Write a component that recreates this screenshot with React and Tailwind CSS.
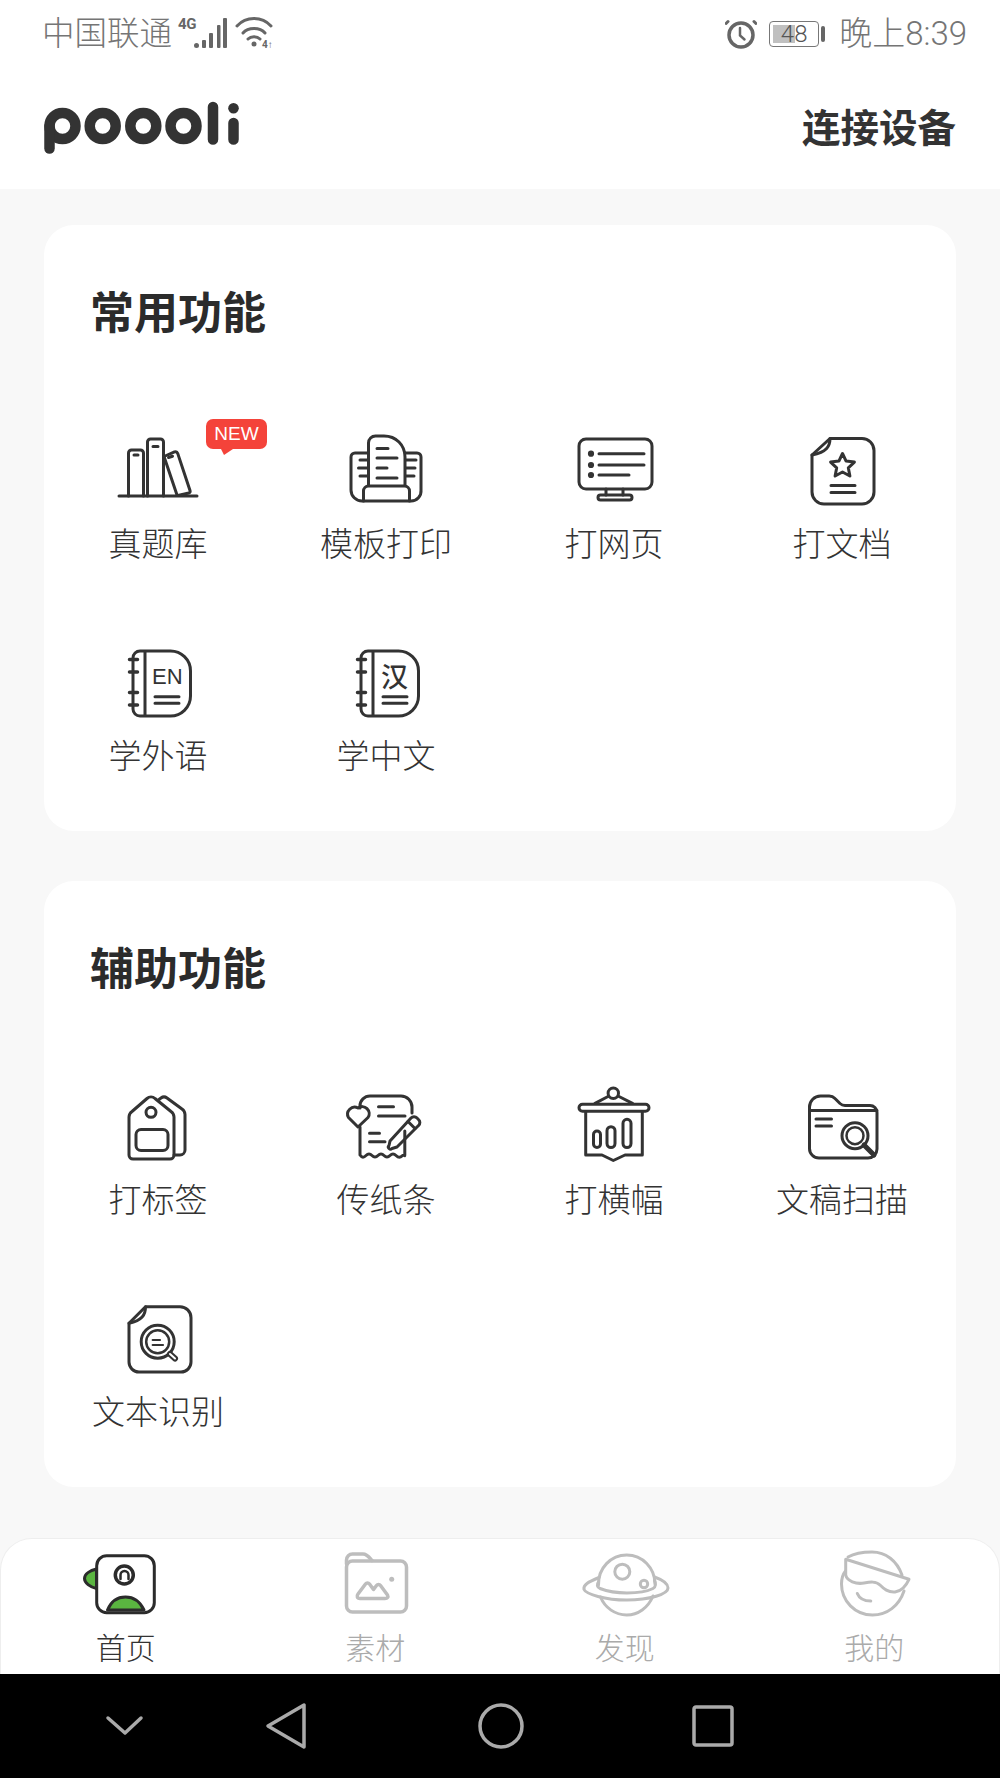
import React from 'react';

const CJK = "font-['Liberation_Sans','Noto_Sans_CJK_SC',sans-serif]";

// 80x80 box, all icons are drawn in this coordinate space
const Ic = ({ color = '#333', sw = 3, children }) => (
  <svg viewBox="0 0 80 80" fill="none" stroke={color} strokeWidth={sw} strokeLinecap="round" strokeLinejoin="round" className="w-[80px] h-[80px] overflow-visible">
    {children}
  </svg>
);

const Books = () => (
  <Ic>
    <path d="M1 68H79" />
    <path d="M10.500 68V25a3 3 0 0 1 3-3h9a3 3 0 0 1 3 3v43" />
    <path d="M29.500 68V14a3 3 0 0 1 3-3h10a3 3 0 0 1 3 3v54" />
    <path d="M16 27h4M35 18.500h5M50.500 29.500l4-1.300" />
    <path d="M46 28.500l10.500-4.600a2.500 2.500 0 0 1 3.200 1.500L72 62.500a2 2 0 0 1-1.300 2.500L60 67.500" />
    <path d="M46 28.500L59 67" />
  </Ic>
);

const Printer = () => (
  <Ic>
    <path d="M22 25H9a4 4 0 0 0-4 4v33a11 11 0 0 0 11 11h49a10 10 0 0 0 10-11V29a4 4 0 0 0-4-4H59" />
    <path d="M22.500 57V15a7 7 0 0 1 7-7H38c12 0 21 9 21 21v28" />
    <path d="M17.500 73V63a5 5 0 0 1 5-5h36a5 5 0 0 1 5 5v10" />
    <path d="M31 20.500h11M31 30h20M31 40h10M31 50h20" />
    <path d="M14 32h7M12.500 40h8.500M14 48h7M60 32h10M60 40h9M60 48h8" />
  </Ic>
);

const Monitor = () => (
  <Ic>
    <rect x="5" y="11" width="73" height="50" rx="7" />
    <path d="M25 25.700H70M25 37H70M25 47H55" />
    <path d="M32 61v6M49 61v6" />
    <rect x="24" y="67" width="34" height="5" rx="2.500" />
    <circle cx="17" cy="25.700" r="1.600" fill="#333" />
    <circle cx="17" cy="37" r="1.600" fill="#333" />
    <circle cx="17" cy="47" r="1.600" fill="#333" />
  </Ic>
);

const DocStar = () => (
  <Ic>
    <path d="M28 10.500H60a12 12 0 0 1 12 12V64a12 12 0 0 1-12 12H22a12 12 0 0 1-12-12V27Z" />
    <path d="M28 10.500C28 18 25 24 10 27" />
    <path d="M40.500 25.500l3.600 7.600 8.300 1-6.100 5.700 1.600 8.200-7.400-4-7.400 4 1.600-8.200-6.100-5.700 8.300-1Z" />
    <path d="M29 57.500H53M29 64.500H53" />
  </Ic>
);

const Notebook = ({ children }) => (
  <Ic>
    <path d="M27 11H52a20 20 0 0 1 20.500 20V56a20 20 0 0 1-20.500 20H27M27 11v65M27 11H22a7 7 0 0 0-7 7V69a7 7 0 0 0 7 7h5" />
    <path d="M11.500 19.500h8M11.500 32h8M11.500 52.500h8M11.500 65h8" strokeWidth="3.500" />
    <path d="M37 56.700H61M37 63.300H61" />
    {children}
  </Ic>
);

const Tag = () => (
  <Ic>
    <path d="M11 33a7 7 0 0 1 3-5.500L29 14.500a6 6 0 0 1 8 0L53 27.500a7 7 0 0 1 3 5.500V71a4 4 0 0 1-4 4H15a4 4 0 0 1-4-4Z" />
    <circle cx="33" cy="28.300" r="5" />
    <rect x="18" y="45.500" width="32" height="21" rx="5" />
    <path d="M41 15.500l2-1.500a5 5 0 0 1 6 0L64 25a7 7 0 0 1 3 5.500V66a5 5 0 0 1-5 5h-6" />
  </Ic>
);

const Receipt = () => (
  <Ic>
    <path d="M14 24v-2a10 10 0 0 1 10-10H55a11 11 0 0 1 11 11v6" />
    <path d="M14 43V71c2 3 4 2.500 6 .500s4-2 6 0 4 2 6 0 4-2 6 0 4 2 6 0 4-2 6 0 4 2.500 6 .500 2.800 1 2.800-1V47" />
    <path d="M12 43 2.500 33.500a7 7 0 0 1 9.500-9.500 7 7 0 0 1 10 9.500Z" />
    <path d="M32.500 22.700h15M32.500 32H59M23.500 49.300h10M23.500 57.700H39" />
    <path d="M44 57 65 34a4 4 0 0 1 6 0l1.500 1.500a4 4 0 0 1 0 6L51 63l-5 1.500a2 2 0 0 1-3-3Z" />
    <path d="M62 37.500l7 7" />
  </Ic>
);

const Banner = () => (
  <Ic>
    <circle cx="39.300" cy="9.300" r="5.200" />
    <path d="M21 19.300 34 12.500M45 12.500 58.500 19.300" />
    <rect x="5" y="20.300" width="70" height="7" rx="3.500" />
    <path d="M11.700 27.500V71H28l11.300 5.500L51 71H68.300V27.500" />
    <rect x="19.500" y="47" width="7" height="16.500" rx="3.500" />
    <rect x="33" y="42.700" width="8" height="20.800" rx="4" />
    <rect x="49" y="35.300" width="8" height="28.200" rx="4" />
  </Ic>
);

const FolderScan = () => (
  <Ic>
    <path d="M7.500 26V23A11 11 0 0 1 18.500 12H27a8 8 0 0 1 6 2.500L38 19.500a8 8 0 0 0 5 2H68a7 7 0 0 1 7 7V65a9 9 0 0 1-9 9H17a9.500 9.500 0 0 1-9.500-9.500Z" />
    <path d="M7.500 26.500H75M14 35H29.500M14 42H29.500" />
    <circle cx="53" cy="51.700" r="13" />
    <circle cx="53" cy="51.700" r="8.500" strokeWidth="2.500" />
    <path d="M62 61l10 10" strokeWidth="5" />
  </Ic>
);

const DocSearch = () => (
  <Ic>
    <path d="M27.500 10.700H62a11 11 0 0 1 11 11V66a10 10 0 0 1-10 10H21a10 10 0 0 1-10-10V27.300Z" />
    <path d="M27.500 10.700C27.500 19 24 24.500 11 27.300" />
    <circle cx="39.700" cy="45.700" r="16.500" />
    <circle cx="39.700" cy="45.700" r="11.500" strokeWidth="2.500" />
    <path d="M34.700 44H42M34.700 49H45" strokeWidth="2.200" />
    <path d="M52 58l5 4.500" strokeWidth="6" />
    <path d="M52 58l5 4.500" strokeWidth="2" stroke="#fff" />
  </Ic>
);

const HomeTab = () => (
  <Ic color="#2b2b2b" sw="3">
    <path d="M10.500 25C4 26.500 -1.500 30 -1.500 34.500S4 43 10.500 44.500Z" fill="#5ab540" />
    <rect x="10.700" y="11.700" width="57.600" height="57" rx="10" fill="#fff" />
    <path d="M21.500 66C25 57.500 31 53 39.500 53S54 57.500 58 66Z" fill="#5ab540" />
    <circle cx="38.300" cy="31" r="9" strokeWidth="3.500" />
    <path d="M34.500 35V31a4 4 0 0 1 8 0v4" strokeWidth="2.500" />
  </Ic>
);

const FolderTab = () => (
  <Ic color="#bdbdbd" sw="3.500">
    <rect x="11.500" y="17" width="60" height="51" rx="6" />
    <path d="M11.500 20V16a6 6 0 0 1 6-6H28c4 0 6 3 9 6.500" />
    <path d="M25 54.500c-3 0-3.500-2.500-2-4.500l7.500-10a2.500 2.500 0 0 1 4 0l4 5.500 3-4a2.500 2.500 0 0 1 4 0l7 9.500c1 2 0 3.500-2.500 3.500Z" />
    <circle cx="56.700" cy="35.300" r="2.500" fill="#bdbdbd" stroke="none" />
  </Ic>
);

const PlanetTab = () => (
  <Ic color="#bdbdbd" sw="3">
    <path d="M13.500 41C13 24 26 11 41.700 11S70 24 70 40M68 52C63 64 53 71 41.700 71S20 64 15.500 53" />
    <path d="M14 33.500C3 38 -2 41 -1 45.500 1 50 20 56 41.700 56 65 56 83 50 83 44 83 40 78 36 69.500 33" />
    <path d="M13.500 38c-2 2.500-1.500 5 1.500 6.500C24 48 34 49 42 49 52 49 62 47.500 68 44.500 71 43 71 39 69.500 36.500" />
    <circle cx="37.300" cy="27.700" r="7.500" />
    <circle cx="59" cy="40" r="3.700" />
  </Ic>
);

const FaceTab = () => (
  <Ic color="#bdbdbd" sw="3">
    <path d="M14 13C21 9 29 8 38 8 52 8 63 17 68 31M70 47C65 62 53 71 38.500 71 21 71 7.500 57 7.500 40 7.500 35 9 30 11.500 27" />
    <path d="M11.700 15.300 75 35.300C72 42 68 47 61 48 54 48.500 50 45 46 41 42 37 36 38 30 39 22 40.500 13 37 11.700 31Z" />
    <path d="M23.300 49.500c2 5 7 7.500 13.500 7.500" />
  </Ic>
);

const Item = ({ label, badge, children }) => (
  <div className="relative h-[212px] flex flex-col items-center pt-[20px]">
    {children}
    <span className="mt-[14px] text-[33px] leading-[46px] font-light text-[#333] whitespace-nowrap">{label}</span>
    {badge && (
      <div className="absolute left-[162px] top-[11px]">
        <div className="w-[61px] h-[30px] rounded-[7px] bg-[#f4433a] text-white text-[19px] leading-[30px] text-center">NEW</div>
        <div className="absolute left-[15px] top-[30px] w-0 h-0 border-t-[6px] border-t-[#f4433a] border-l-[3px] border-l-transparent border-r-[9px] border-r-transparent" />
      </div>
    )}
  </div>
);

const Card = ({ title, children }) => (
  <section className="h-[606px] bg-white rounded-[30px] pt-[59px]">
    <h2 className="pl-[46px] text-[44px] leading-[60px] font-bold text-[#2b2b2b]">{title}</h2>
    <div className="mt-[64px] grid grid-cols-4">{children}</div>
  </section>
);

const Tab = ({ label, active, children }) => (
  <div className="flex flex-col items-center pt-[5px]">
    {children}
    <span className={active ? 'mt-[5px] text-[30px] leading-[40px] font-light text-[#333]' : 'mt-[5px] text-[30px] leading-[40px] font-light text-[#aaa]'}>{label}</span>
  </div>
);

const StatusBar = () => (
  <div className="h-[68px] flex items-center justify-between pl-[42px] pr-[33px] text-[#757575] text-[32px] font-light">
    <div className="flex items-center">
      <span className="leading-[40px] text-[32.500px]">中国联通</span>
      <div className="relative w-[110px] h-[40px]">
        <span className="absolute left-[6px] top-0 text-[15px] leading-[20px] font-bold tracking-tight font-['Roboto',sans-serif] text-[#666]">4G</span>
        {/* signal bars */}
        <svg width="110" height="40" viewBox="0 0 110 40" className="absolute left-0 top-0" fill="#666">
          <circle cx="24.500" cy="31.500" r="2.500" />
          <rect x="30" y="26" width="4" height="8" rx="1" />
          <rect x="37" y="19" width="4" height="15" rx="1" />
          <rect x="45" y="11" width="3.500" height="23" rx="1" />
          <rect x="51" y="4" width="4" height="30" rx="1" />
          <g fill="none" stroke="#666" strokeWidth="3" strokeLinecap="round">
            <path d="M65 12C74 2 90 2 99 12" />
            <path d="M71 19C76 13 88 13 93 19" />
            <path d="M76 25C79 22 85 22 88 25" />
          </g>
          <circle cx="82" cy="30" r="2.500" />
          <text x="90" y="34" fontSize="10" fontWeight="700" fontFamily="Roboto, sans-serif">4↑</text>
        </svg>
      </div>
    </div>
    <div className="flex items-center">
      <svg width="32" height="32" viewBox="0 0 32 32" fill="none" stroke="#666" strokeWidth="3.500" strokeLinecap="round" className="mr-[12px]">
        <circle cx="16" cy="17" r="12" />
        <path d="M15 10v7.500l4.500 4" strokeWidth="2.500" />
        <path d="M3 3.500 1 5.500M29 3.500 31 5.500" strokeWidth="3" />
      </svg>
      <div className="relative w-[50px] h-[26px] rounded-[4px] border border-[#777] overflow-hidden mr-[2px] flex items-center">
        <div className="absolute left-[3px] top-[3px] bottom-[3px] w-[22px] bg-[#c0c0c0]" />
        <span className="relative w-full text-center text-[24px] leading-[24px] font-['Roboto',sans-serif] text-[#555]">48</span>
      </div>
      <div className="w-[4px] h-[16px] rounded-[2px] bg-[#666] mr-[14px]" />
      <span className="leading-[40px] font-['Roboto','Noto_Sans_CJK_SC',sans-serif] text-[33px]">晚上8:39</span>
    </div>
  </div>
);

export default function App() {
  return (
    <div className={`${CJK} w-[1000px] h-[1778px] flex flex-col bg-[#f8f8f8]`}>
      {/* 상단 헤더 */}
      <header className="h-[189px] bg-white shrink-0">
        <StatusBar />
        <div className="flex items-center justify-between pl-[44px] pr-[44px] h-[121px]">
          <svg width="200" height="60" viewBox="44 98 200 60" fill="none" stroke="#333" strokeWidth="10.500" strokeLinecap="round">
            <circle cx="62.500" cy="125" r="13" />
            <path d="M49.500 125V147.500" />
            <circle cx="102.700" cy="125" r="13" />
            <circle cx="143.300" cy="125" r="13" />
            <circle cx="183.500" cy="125" r="13" />
            <path d="M213 106V138.500M233.500 122V138.500" />
            <circle cx="233.500" cy="107.300" r="5.300" fill="#333" stroke="none" />
          </svg>
          <span className="text-[38.500px] leading-[50px] font-bold text-[#333]">连接设备</span>
        </div>
      </header>

      <main className="flex-1 px-[44px] pt-[36px] flex flex-col gap-[50px]">
        <Card title="常用功能">
          <Item label="真题库" badge><Books /></Item>
          <Item label="模板打印"><Printer /></Item>
          <Item label="打网页"><Monitor /></Item>
          <Item label="打文档"><DocStar /></Item>
          <Item label="学外语">
            <Notebook>
              <text x="34" y="43.500" fontSize="22" fill="#333" stroke="none" fontFamily="Liberation Sans, sans-serif">EN</text>
            </Notebook>
          </Item>
          <Item label="学中文">
            <Notebook>
              <text x="35" y="47" fontSize="27" fontWeight="500" fill="#333" stroke="none" fontFamily="Noto Sans CJK SC, sans-serif">汉</text>
            </Notebook>
          </Item>
        </Card>

        <Card title="辅助功能">
          <Item label="打标签"><Tag /></Item>
          <Item label="传纸条"><Receipt /></Item>
          <Item label="打横幅"><Banner /></Item>
          <Item label="文稿扫描"><FolderScan /></Item>
          <Item label="文本识别"><DocSearch /></Item>
        </Card>
      </main>

      {/* 하단 탭 */}
      <nav className="h-[136px] shrink-0 grid grid-cols-4 bg-white rounded-t-[32px] border-t border-x border-[#eeeeee]">
        <Tab label="首页" active><HomeTab /></Tab>
        <Tab label="素材"><FolderTab /></Tab>
        <Tab label="发现"><PlanetTab /></Tab>
        <Tab label="我的"><FaceTab /></Tab>
      </nav>

      {/* 시스템 내비게이션 */}
      <div className="h-[104px] shrink-0 bg-black flex items-center pl-[105px]">
        <svg width="40" height="40" viewBox="0 0 40 40" fill="none" stroke="#aaa" strokeWidth="3.500" strokeLinecap="round" strokeLinejoin="round">
          <path d="M3 12 20 27 36 12" />
        </svg>
        <svg width="44" height="48" viewBox="0 0 44 48" fill="none" stroke="#aaa" strokeWidth="3.500" strokeLinejoin="round" className="ml-[120px]">
          <path d="M39 3V45L3 24Z" />
        </svg>
        <svg width="48" height="48" viewBox="0 0 48 48" fill="none" stroke="#aaa" strokeWidth="3.500" className="ml-[168px]">
          <circle cx="24" cy="24" r="21" />
        </svg>
        <svg width="42" height="42" viewBox="0 0 42 42" fill="none" stroke="#aaa" strokeWidth="3.500" className="ml-[167px]">
          <rect x="2" y="2" width="38" height="38" rx="2" />
        </svg>
      </div>
    </div>
  );
}
